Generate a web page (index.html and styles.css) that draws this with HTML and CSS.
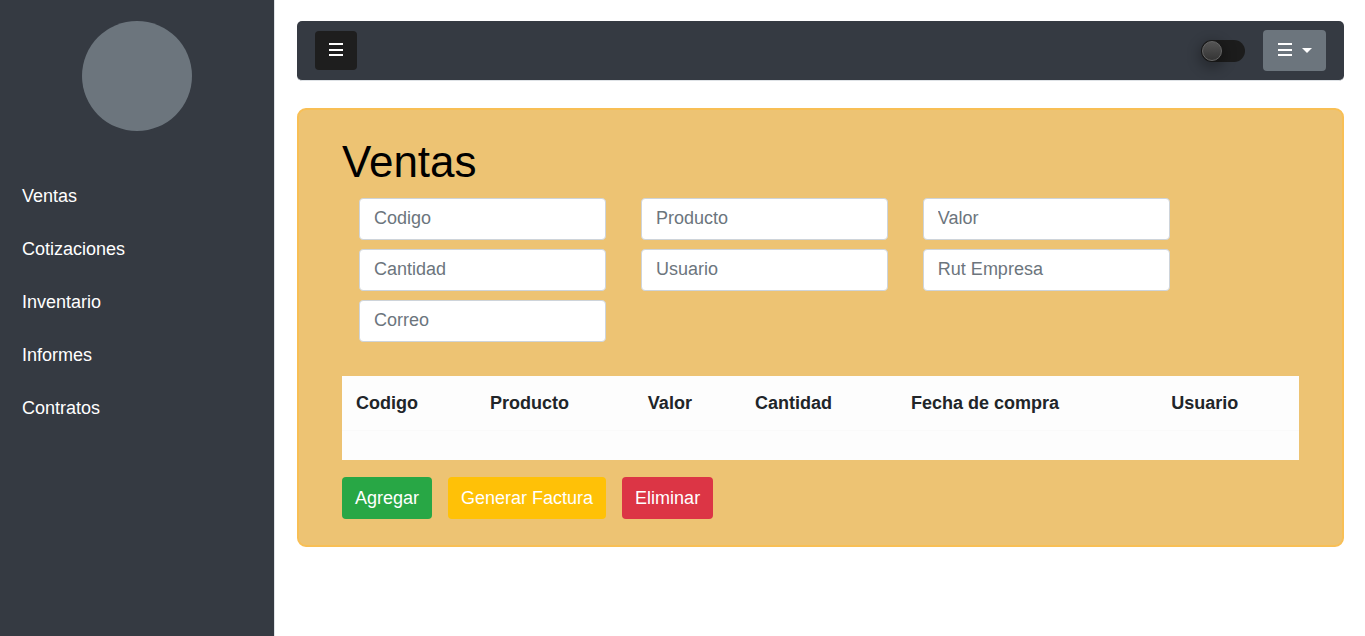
FILE: index.html
```html
<!DOCTYPE html>
<html lang="es">
<head>
<meta charset="utf-8">
<meta name="viewport" content="width=device-width, initial-scale=1">
<title>Ventas</title>
<link rel="stylesheet" href="styles.css">
</head>
<body>
<div class="layout">
  <aside class="sidebar">
    <div class="avatar"></div>
    <nav class="menu">
      <a href="#">Ventas</a>
      <a href="#">Cotizaciones</a>
      <a href="#">Inventario</a>
      <a href="#">Informes</a>
      <a href="#">Contratos</a>
    </nav>
  </aside>
  <main class="content">
    <header class="topbar">
      <button type="button" class="toggle-menu" aria-label="Mostrar menú">
        <svg class="bars" viewBox="0 0 14 17" aria-hidden="true"><path d="M0 1h14v2H0zM0 7h14v2H0zM0 12h14v2H0z"/></svg>
      </button>
      <div class="topbar-end">
        <input type="checkbox" class="switch" aria-label="Modo oscuro">
        <button type="button" class="dropdown" aria-label="Opciones">
          <svg class="bars" viewBox="0 0 14 17" aria-hidden="true"><path d="M0 1h14v2H0zM0 7h14v2H0zM0 12h14v2H0z"/></svg>
          <span class="caret"></span>
        </button>
      </div>
    </header>
    <section class="card">
      <h1>Ventas</h1>
      <form class="fields">
        <input type="text" placeholder="Codigo" aria-label="Codigo">
        <input type="text" placeholder="Producto" aria-label="Producto">
        <input type="text" placeholder="Valor" aria-label="Valor">
        <input type="text" placeholder="Cantidad" aria-label="Cantidad">
        <input type="text" placeholder="Usuario" aria-label="Usuario">
        <input type="text" placeholder="Rut Empresa" aria-label="Rut Empresa">
        <input type="text" placeholder="Correo" aria-label="Correo">
      </form>
      <table class="sales">
        <colgroup>
          <col class="c-code"><col class="c-product"><col class="c-value"><col class="c-amount"><col class="c-date"><col class="c-user">
        </colgroup>
        <thead>
          <tr><th>Codigo</th><th>Producto</th><th>Valor</th><th>Cantidad</th><th>Fecha de compra</th><th>Usuario</th></tr>
        </thead>
        <tbody>
          <tr><td></td><td></td><td></td><td></td><td></td><td></td></tr>
        </tbody>
      </table>
      <div class="actions">
        <button type="button" class="btn add">Agregar</button>
        <button type="button" class="btn invoice">Generar Factura</button>
        <button type="button" class="btn remove">Eliminar</button>
      </div>
    </section>
  </main>
</div>
</body>
</html>
```
FILE: styles.css
```css
*, ::before, ::after { box-sizing: border-box; }

body {
  margin: 0;
  background: #fff;
  color: #212529;
  font: 18px/26px "Liberation Sans", Arial, sans-serif;
}

button, input { font: inherit; }

.layout {
  display: flex;
  min-height: 100vh;
}

.sidebar {
  flex: 0 0 275px;
  padding-top: 21px;
  background: #353a42;
  border-right: 1px solid #dee2e6;
}

.avatar {
  width: 110px;
  height: 110px;
  margin: 0 auto;
  border-radius: 50%;
  background: #6c757d;
}

.menu {
  display: flex;
  flex-direction: column;
  margin-top: 39px;
}

.menu a {
  padding: 13px 22px 14px;
  color: #fff;
  text-decoration: none;
}

.content {
  flex: 1;
  min-width: 0;
  padding: 21px 21px 21px 22px;
}

.topbar {
  display: flex;
  align-items: center;
  justify-content: space-between;
  padding: 9px 18px;
  background: #353a42;
  border-bottom: 1px solid #dee2e6;
  border-radius: 5px;
}

.topbar-end {
  display: flex;
  align-items: center;
  gap: 18px;
}

.toggle-menu, .dropdown {
  display: flex;
  align-items: center;
  border: 0;
  border-radius: 4px;
}

.toggle-menu {
  height: 39px;
  padding: 0 14px;
  background: #1e1e1e;
}

.dropdown {
  height: 41px;
  gap: 10px;
  padding: 0 14px 0 15px;
  background: #6c757d;
}

.bars {
  width: 14px;
  height: 17px;
  fill: #fff;
}

.caret {
  border: 5px solid transparent;
  border-top-color: #fff;
  border-bottom: 0;
}

.switch {
  appearance: none;
  display: flex;
  width: 44px;
  height: 22px;
  margin: 0;
  padding: 1px;
  border-radius: 11px;
  background: #1c1c1c;
}

.switch::before {
  content: "";
  width: 20px;
  height: 20px;
  border: 1px solid #666;
  border-radius: 50%;
  background: linear-gradient(#545454, #353535);
  box-shadow: 0 4px 12px 4px rgba(0, 0, 0, 0.25);
}

.switch:checked { justify-content: flex-end; }

.card {
  margin-top: 27px;
  padding: 26px 43px;
  background: #edc373;
  border: 2px solid #f8bf55;
  border-radius: 9px;
}

h1 {
  margin: 0;
  color: #000;
  font-size: 44px;
  font-weight: 400;
  line-height: 52px;
}

.fields {
  display: grid;
  grid-template-columns: repeat(3, 1fr);
  gap: 9px 35px;
  width: 86.5%;
  margin-top: 10px;
  padding-left: 17px;
}

.fields input {
  width: 100%;
  min-width: 0;
  height: 42px;
  padding: 0 14px 2px;
  border: 1px solid #ced4da;
  border-radius: 4px;
  background: #fff;
  color: #495057;
}

.fields input::placeholder {
  color: #6c757d;
  opacity: 1;
}

.sales {
  width: 100%;
  margin-top: 34px;
  border-collapse: collapse;
  table-layout: fixed;
  background: #fdfdfd;
}

.c-code { width: 14%; }
.c-product { width: 16.5%; }
.c-value { width: 11.2%; }
.c-amount { width: 16.3%; }
.c-date { width: 27.2%; }
.c-user { width: 14.8%; }

.sales th {
  padding: 14px;
  border-bottom: 1px solid #fafafa;
  text-align: left;
}

.sales td { padding: 14px; height: 29px; }

.actions {
  display: flex;
  gap: 16px;
  margin-top: 17px;
}

.btn {
  height: 42px;
  padding: 0 13px;
  border: 0;
  border-radius: 4px;
  color: #fff;
}

.add { background: #28a745; }
.invoice { background: #ffc107; }
.remove { background: #dc3545; }
```
